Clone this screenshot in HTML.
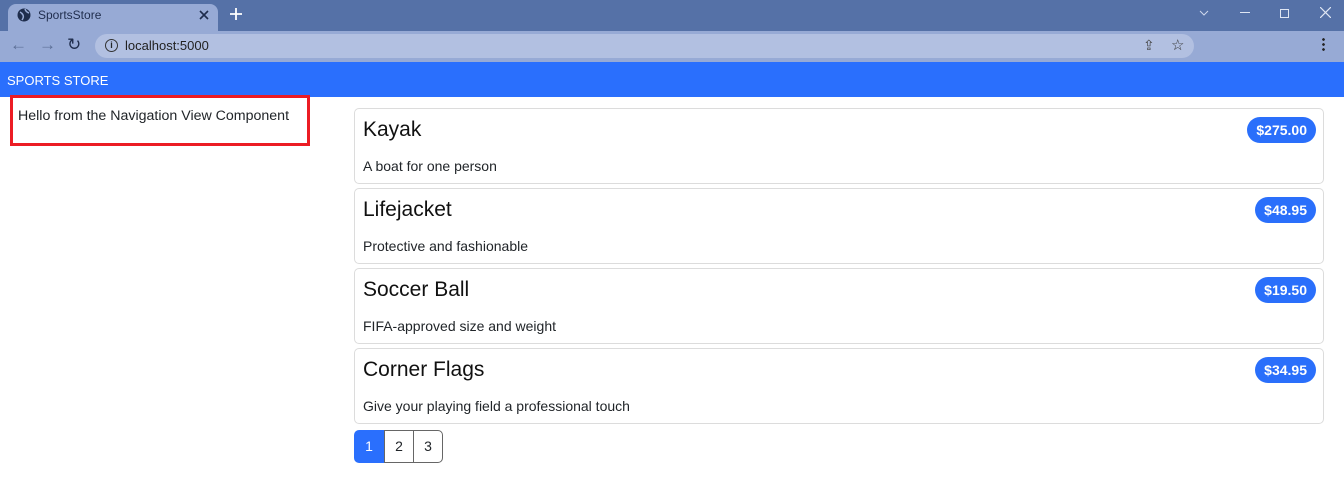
<!DOCTYPE html>
<html><head><style>
*{box-sizing:border-box;margin:0;padding:0}
body{width:1344px;height:487px;overflow:hidden;background:#fff;font-family:"Liberation Sans",sans-serif;color:#212529;position:relative}
.abs{position:absolute}
.card{position:absolute;left:354px;width:970px;height:76px;border:1px solid #dcdcdc;border-radius:5px}
.card h4{position:absolute;left:8px;top:9px;font-size:21px;font-weight:normal;color:#111}
.card p{position:absolute;left:8px;top:49px;font-size:14px}
.badge{position:absolute;right:7px;top:8px;height:26px;line-height:26px;padding:0 9px;border-radius:13px;background:#2a6ffb;color:#fff;font-weight:bold;font-size:14px}
.pg{position:absolute;top:430px;height:33px;width:30px;border:1px solid #666;text-align:center;line-height:31px;font-size:14px}
</style></head><body>
<div class="abs" style="left:0;top:0;width:1344px;height:31px;background:#5571a7"></div>
<div class="abs" style="left:8px;top:4px;width:210px;height:27px;background:#97aad5;border-radius:8px 8px 0 0"></div>
<svg class="abs" style="left:17px;top:8px" width="14" height="14" viewBox="0 0 14 14"><circle cx="7" cy="7" r="6.5" fill="#1f2d4d"/><path d="M3 4q2 1 3 3t-1 5M8 1q1 3 4 4" stroke="#97aad5" stroke-width="1.5" fill="none"/></svg>
<div class="abs" style="left:38px;top:8px;font-size:12px;color:#1f2d4d">SportsStore</div>
<svg class="abs" style="left:199px;top:10px" width="10" height="10" viewBox="0 0 10 10"><path d="M1 1L9 9M9 1L1 9" stroke="#1f2d4d" stroke-width="1.6"/></svg>
<svg class="abs" style="left:230px;top:8px" width="12" height="12" viewBox="0 0 12 12"><path d="M6 0V12M0 6H12" stroke="#fff" stroke-width="1.8"/></svg>
<svg class="abs" style="left:1199px;top:10px" width="10" height="6" viewBox="0 0 10 6"><path d="M1 1L5 5L9 1" stroke="#cfd8ec" fill="none"/></svg>
<div class="abs" style="left:1240px;top:12px;width:10px;height:1px;background:#dfe6f3"></div>
<div class="abs" style="left:1280px;top:9px;width:9px;height:9px;border:1px solid #dfe6f3"></div>
<svg class="abs" style="left:1320px;top:7px" width="11" height="11" viewBox="0 0 11 11"><path d="M0 0L11 11M11 0L0 11" stroke="#dfe6f3" stroke-width="1.2"/></svg>
<div class="abs" style="left:0;top:31px;width:1344px;height:31px;background:#97aad5"></div>
<div class="abs" style="left:10px;top:35px;font-size:17px;color:#5c6f96">←</div>
<div class="abs" style="left:39px;top:35px;font-size:17px;color:#5c6f96">→</div>
<div class="abs" style="left:67px;top:35px;font-size:17px;color:#1f2d4d">↻</div>
<div class="abs" style="left:95px;top:34px;width:1099px;height:24px;background:#b2c0e1;border-radius:12px"></div>
<div class="abs" style="left:105px;top:39px;width:13px;height:13px;border:1.5px solid #333;border-radius:50%;font-size:9px;text-align:center;line-height:11px;font-weight:bold">i</div>
<div class="abs" style="left:125px;top:38px;font-size:13px;color:#222">localhost:5000</div>
<div class="abs" style="left:1143px;top:37px;font-size:14px;color:#444">⇪</div>
<div class="abs" style="left:1171px;top:36px;font-size:15px;color:#333">☆</div>
<div class="abs" style="left:1322px;top:37px;width:3px;height:15px;background:radial-gradient(circle,#222 1.2px,transparent 1.5px) 0 0/3px 5px"></div>
<div class="abs" style="left:0;top:62px;width:1344px;height:35px;background:#2a6ffd"></div>
<div class="abs" style="left:7px;top:73px;font-size:13px;color:#fff">SPORTS STORE</div>
<div class="abs" style="left:10px;top:95px;width:300px;height:51px;border:3px solid #ec1c24"></div>
<div class="abs" style="left:18px;top:108px;font-size:14.2px">Hello from the Navigation View Component</div>
<div class="card" style="top:108px"><h4>Kayak</h4><span class="badge">$275.00</span><p>A boat for one person</p></div>
<div class="card" style="top:188px"><h4>Lifejacket</h4><span class="badge">$48.95</span><p>Protective and fashionable</p></div>
<div class="card" style="top:268px"><h4>Soccer Ball</h4><span class="badge">$19.50</span><p>FIFA-approved size and weight</p></div>
<div class="card" style="top:348px"><h4>Corner Flags</h4><span class="badge">$34.95</span><p>Give your playing field a professional touch</p></div>
<div class="pg" style="left:354px;background:#2a6ffd;color:#fff;border-color:#2a6ffd;border-radius:5px 0 0 5px">1</div>
<div class="pg" style="left:384px">2</div>
<div class="pg" style="left:413px;border-radius:0 5px 5px 0">3</div>
</body></html>
